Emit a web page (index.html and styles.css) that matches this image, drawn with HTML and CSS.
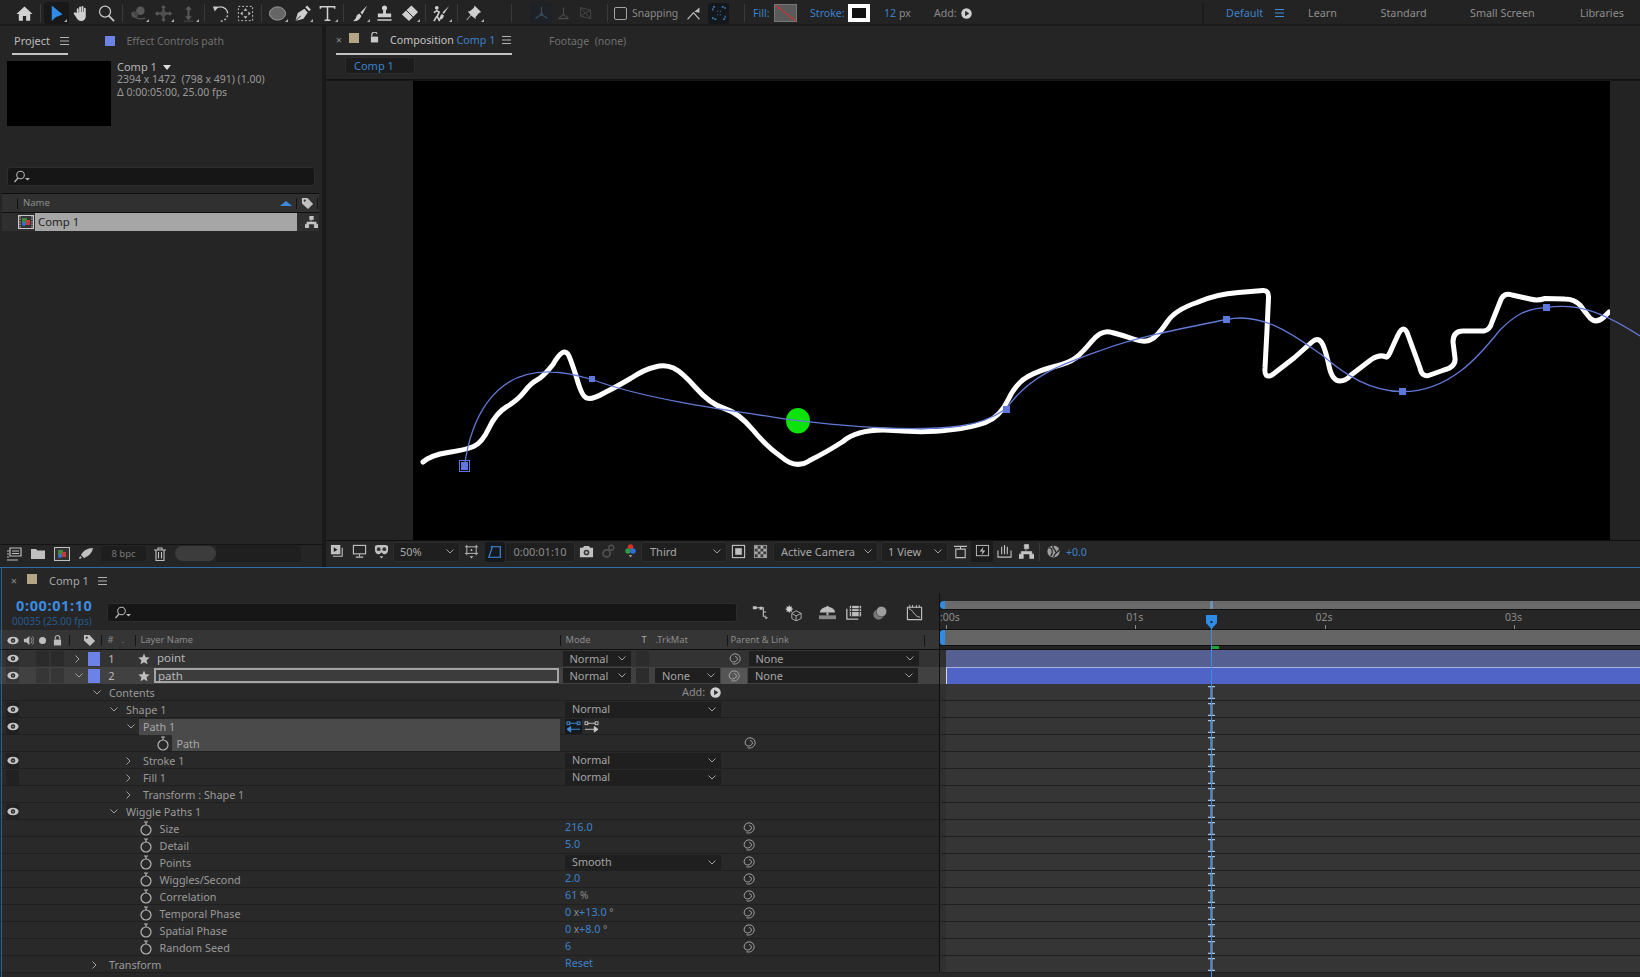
FILE: index.html
```html
<!DOCTYPE html>
<html lang="en">
<head>
<meta charset="utf-8">
<title>After Effects</title>
<link rel="stylesheet" href="styles.css">
</head>
<body>
<svg class="defs" aria-hidden="true">
  <symbol id="eye" viewBox="0 0 14 10"><ellipse cx="7" cy="5" rx="6.5" ry="4.4" fill="#c4c4c4"/><circle cx="7" cy="5" r="2.6" fill="#2a2a2a"/><circle cx="7" cy="5" r="1" fill="#888"/></symbol>
  <symbol id="spiral" viewBox="0 0 14 14"><path d="M4 12.500C8.500 14 13 11 13 6.800 13 3.300 10.500 1 7 1 3.800 1 1.300 3.600 1.300 6.800 1.300 9 3 10.500 5.500 10.500 7.800 10.500 9.800 8.800 9.800 6.800 9.800 5.200 8.500 4.200 7 4.200" fill="none" stroke="#a8a8a8" stroke-width="1.100"/></symbol>
  <symbol id="watch" viewBox="0 0 12 15"><circle cx="6" cy="9" r="5" fill="none" stroke="#b5b5b5" stroke-width="1.200"/><path d="M6 1v3M4 1h4" stroke="#b5b5b5" stroke-width="1.200"/></symbol>
  <symbol id="chev-d" viewBox="0 0 8 5"><path d="M.5.5 4 4 7.500.5" fill="none" stroke="#a0a0a0"/></symbol>
  <symbol id="chev-r" viewBox="0 0 5 8"><path d="M.5.5 4 4 .5 7.500" fill="none" stroke="#a0a0a0"/></symbol>
  <symbol id="menu" viewBox="0 0 9 8"><path d="M0 .5h9M0 4h9M0 7.500h9" stroke="#b0b0b0"/></symbol>
  <symbol id="star" viewBox="0 0 12 12"><path d="M6 .5 7.600 4.300 11.700 4.600 8.600 7.300 9.500 11.300 6 9.200 2.500 11.300 3.400 7.300.3 4.600 4.400 4.300z" fill="#bdbdbd"/></symbol>
  <symbol id="search" viewBox="0 0 18 13"><circle cx="7.500" cy="5" r="3.800" fill="none" stroke="#b5b5b5" stroke-width="1.100"/><path d="M5 8 1.500 12" stroke="#b5b5b5" stroke-width="1.300"/><path d="M12 8h5l-2.500 2.500z" fill="#b5b5b5"/></symbol>
  <symbol id="play" viewBox="0 0 12 12"><circle cx="6" cy="6" r="5.700" fill="#d0d0d0"/><path d="M4.500 3v6L9 6z" fill="#2a2a2a"/></symbol>
  <symbol id="tag" viewBox="0 0 14 14"><path d="M1 1h6l6 6.500L7.500 13 1 7z" fill="#c0c0c0"/><circle cx="4" cy="4" r="1.200" fill="#333"/></symbol>
  <symbol id="ibeam" viewBox="0 0 7 13"><path d="M0 .7h7M0 12.300h7" stroke="#a6c2de" stroke-width="1.300" fill="none"/><path d="M2.500 .7h2v11.600h-2z" fill="#8fb2d6"/></symbol>
  <symbol id="net" viewBox="0 0 14 13"><path d="M5 0h4v4H5zM0 9h4v4H0zM10 9h4v4h-4zM6.500 4v2.500M2 9V6.500h10V9" fill="#c4c4c4" stroke="#c4c4c4" stroke-width=".6"/></symbol>
</svg>

<header class="toolbar">
  <span class="grip"></span>
  <span class="tool"><svg viewBox="0 0 20 20"><path d="M10 2.500 1.500 10.500H4V17.500H8.300V12.500H11.700V17.500H16V10.500H18.500z" fill="#d2d2d2"/></svg></span>
  <i class="sep"></i>
  <span class="tool on corner"><svg viewBox="0 0 20 20"><path d="M5 1.500V18L9.500 13.700 16.500 11z" fill="#2f8ce6"/></svg></span>
  <span class="tool"><svg viewBox="0 0 20 20"><path d="M5 9.500V5.500a1 1 0 0 1 2 0V9h.5V3.500a1 1 0 0 1 2 0V8.500h.5V3a1 1 0 0 1 2 0V8.500h.5V5a1 1 0 0 1 2 0V12.500c0 3.200-2 5.500-5 5.500-2.800 0-4-1.800-5.500-4.500L2 10.500c-.8-1.300 1.200-2.300 2-1.300z" fill="#cfcfcf"/></svg></span>
  <span class="tool"><svg viewBox="0 0 20 20"><circle cx="8.500" cy="8" r="5.800" fill="none" stroke="#c8c8c8" stroke-width="1.300"/><path d="M12.500 12.500 18 18" stroke="#c8c8c8" stroke-width="1.800"/></svg></span>
  <i class="sep"></i>
  <span class="tool corner dim"><svg viewBox="0 0 20 20"><circle cx="12" cy="7" r="4.500" fill="#777"/><circle cx="6" cy="11" r="3.500" fill="#5a5a5a"/><path d="M3 9c2 6 8 8 14 6" fill="none" stroke="#777" stroke-width="1.300"/></svg></span>
  <span class="tool corner dim"><svg viewBox="0 0 20 20"><path d="M10 2v16M2 10h16" stroke="#777" stroke-width="2"/><path d="M10 1 7.500 4h5zM10 19l-2.500-3h5zM1 10l3-2.500v5zM19 10l-3-2.500v5z" fill="#777"/><circle cx="10" cy="10" r="3" fill="#666"/></svg></span>
  <span class="tool corner dim"><svg viewBox="0 0 20 20"><path d="M10 3v13" stroke="#777" stroke-width="2"/><path d="M6.500 6 10 2l3.500 4zM6.500 13 10 17l3.500-4z" fill="#777"/><path d="M5 18h10" stroke="#666"/></svg></span>
  <i class="sep"></i>
  <span class="tool"><svg viewBox="0 0 20 20"><path d="M4.500 5.500A7.500 7.500 0 1 1 5 16" fill="none" stroke="#c8c8c8" stroke-width="1.400" stroke-dasharray="14 .01 3 2 2 2 2 2 2"/><path d="M2 2.500 7.500 2.500 4 8z" fill="#c8c8c8"/></svg></span>
  <span class="tool"><svg viewBox="0 0 20 20"><rect x="2.500" y="2.500" width="15" height="15" fill="none" stroke="#c8c8c8" stroke-dasharray="2 2"/><path d="M10 4.500 8 7h4zM10 15.500 8 13h4zM4.500 10 7 8v4zM15.500 10 13 8v4z" fill="#c8c8c8"/></svg></span>
  <i class="sep"></i>
  <span class="tool corner"><svg viewBox="0 0 20 20"><ellipse cx="10" cy="10" rx="8.500" ry="7" fill="#666" stroke="#999"/></svg></span>
  <span class="tool corner"><svg viewBox="0 0 20 20"><path d="M2.500 18 5 9.500 12 5l3.500 4L11 15.500zM13 3.500l1.800-1.800 4 4L17 7.500z" fill="#cfcfcf"/><path d="M2.500 18 8 12.500" stroke="#222"/></svg></span>
  <span class="tool corner"><svg viewBox="0 0 20 20"><path d="M2.500 5V2.800H17.500V5M10 2.800V17M7 17h6" fill="none" stroke="#cfcfcf" stroke-width="1.600"/></svg></span>
  <i class="sep"></i>
  <span class="tool corner"><svg viewBox="0 0 20 20"><path d="M18 1.500 11 9l2 2zM10 10l-2.500 1.500C6.500 13 6.500 16 3 18c4 .5 7.500-1.500 9-5.500z" fill="#cfcfcf"/></svg></span>
  <span class="tool"><svg viewBox="0 0 20 20"><path d="M10 1.500a2.700 2.700 0 0 1 1.500 5V10H17v4H3v-4h5.500V6.500a2.700 2.700 0 0 1 1.500-5zM2.500 16h15v1.500h-15z" fill="#cfcfcf"/></svg></span>
  <span class="tool corner"><svg viewBox="0 0 20 20"><path d="M12 1.500 19 8.500 9.500 18 2 11z" fill="#cfcfcf"/><path d="M6.500 6.500 14 14" stroke="#222"/></svg></span>
  <i class="sep"></i>
  <span class="tool corner"><svg viewBox="0 0 20 20"><circle cx="5" cy="4" r="2" fill="#cfcfcf"/><path d="M2 9l3-2 2.500 1.500L5.500 13 8 18M5 13 2 18" fill="none" stroke="#cfcfcf" stroke-width="1.700"/><path d="M18 2 11 9l1.500 1.500zM10.500 10.500c-2 1-1.500 4-4 6 3 .5 5.500-1 6-4.500z" fill="#cfcfcf"/></svg></span>
  <i class="sep"></i>
  <span class="tool corner"><svg viewBox="0 0 20 20"><path d="M11 1.500 18 8.500 15.800 9.500 12 14 12.500 16 7.500 12 3 17 2.500 16.500 7 11.500 4 8 6 7.500 10.500 4z" fill="#cfcfcf"/></svg></span>
  <i class="sep far"></i>
  <span class="mini first"><svg viewBox="0 0 20 20"><path d="M10 2v9M10 11 3 16M10 11l7 5" stroke="#3a4c5c" stroke-width="1.400"/><circle cx="10" cy="11" r="2" fill="#3a4c5c"/></svg></span>
  <span class="mini"><svg viewBox="0 0 20 20"><path d="M10 3v8M10 11 4 16M10 11l6 5M4 16h12" stroke="#4a4a4a" stroke-width="1.300" fill="none"/></svg></span>
  <span class="mini"><svg viewBox="0 0 20 20"><path d="M4 3 16 6V16L4 13zM4 13 16 6M4 3 16 16" stroke="#4a4a4a" fill="none"/></svg></span>
  <i class="sep near"></i>
  <span class="check"></span><span class="snap-label">Snapping</span>
  <span class="mini"><svg viewBox="0 0 20 20"><path d="M3 17 10 9 17 17" fill="none" stroke="#bdbdbd" stroke-width="1.400"/><path d="M11 8l6-5v6zM10 9l4-4" fill="#bdbdbd"/></svg></span>
  <span class="focus"><svg viewBox="0 0 16 16"><path d="M1 5V1h4M11 1h4v4M15 11v4h-4M5 15H1v-4M6 6h1M9 6h1M6 10h1M9 10h1" fill="none" stroke="#3f8fdc" stroke-width="1.300" stroke-dasharray="2.500 1.500"/></svg></span>
  <i class="sep fill-sep"></i>
  <span class="link fill-label">Fill:</span>
  <span class="swatch-fill"></span>
  <span class="link stroke-label">Stroke:</span>
  <span class="swatch-stroke"></span>
  <span class="stroke-size"><span class="link">12</span> px</span>
  <span class="add-label">Add:</span>
  <svg class="play"><use href="#play"/></svg>
  <nav class="workspaces">
    <span class="link">Default</span>
    <svg class="ws-menu" viewBox="0 0 9 8"><path d="M0 .5h9M0 4h9M0 7.500h9" stroke="#3f8fdc"/></svg>
    <span>Learn</span><span>Standard</span><span>Small Screen</span><span>Libraries</span>
  </nav>
</header>

<main class="upper">
  <section class="project">
    <div class="tabs">
      <span class="tab tab-project">Project<svg class="menu"><use href="#menu"/></svg></span>
      <span class="blue-sq"></span>
      <span class="tab-dim">Effect Controls path</span>
    </div>
    <div class="info">
      <div class="thumb"></div>
      <div class="meta">
        <div class="meta-title">Comp 1 <b class="tri"></b></div>
        <div>2394 x 1472&nbsp; (798 x 491) (1.00)</div>
        <div>Δ 0:00:05:00, 25.00 fps</div>
      </div>
    </div>
    <div class="search p-search"><svg class="search-i"><use href="#search"/></svg></div>
    <div class="p-head">
      <i class="vline v1"></i><span class="p-name">Name</span>
      <b class="sort"></b><i class="vline v2"></i>
      <svg class="tag"><use href="#tag"/></svg><i class="vline v3"></i>
    </div>
    <div class="p-row">
      <svg class="comp-i" viewBox="0 0 16 14"><rect x=".5" y=".5" width="15" height="13" fill="#333" stroke="#c8c8c8"/><path d="M2 1v12M14 1v12" stroke="#c8c8c8" stroke-dasharray="1.500 1"/><rect x="4" y="3" width="5" height="5" fill="#3d8a3d"/><rect x="8" y="5" width="4" height="5" fill="#c23a3a"/><circle cx="6" cy="9" r="2" fill="#3d6fd0"/></svg>
      <span class="p-sel">Comp 1</span>
      <svg class="net"><use href="#net"/></svg>
    </div>
    <div class="p-fill"></div>
    <div class="p-foot">
      <span class="foot-i"><svg viewBox="0 0 16 14"><path d="M4 1h11v8H4zM1 4h2M1 7h2M1 10h2M1 13h11" fill="none" stroke="#c0c0c0" stroke-width="1.200"/><path d="M6 4h7M6 6.500h7" stroke="#c0c0c0"/></svg></span>
      <span class="foot-i"><svg viewBox="0 0 16 14"><path d="M1 2h5l1.500 1.500H15V12H1z" fill="#c0c0c0"/></svg></span>
      <span class="foot-i"><svg viewBox="0 0 16 14"><rect x=".5" y=".5" width="15" height="13" fill="#333" stroke="#c0c0c0"/><rect x="4" y="3" width="5" height="5" fill="#3d8a3d"/><rect x="8" y="5" width="4" height="5" fill="#c23a3a"/><circle cx="6" cy="9" r="2" fill="#3d6fd0"/></svg></span>
      <span class="foot-i"><svg viewBox="0 0 16 14"><path d="M15 1C9 1 5 4 3 8l3 3c5-2 8-5 9-10zM2 9l-1 3 3-1z" fill="#c0c0c0"/></svg></span>
      <span class="bpc">8 bpc</span>
      <span class="foot-i trash"><svg viewBox="0 0 14 14"><path d="M1 3h12M5 3V1h4v2M3 3v10.500h8V3M5.500 5v6.500M8.500 5v6.500" fill="none" stroke="#c0c0c0" stroke-width="1.100"/></svg></span>
      <span class="pill"></span>
      <span class="foot-rest"></span>
    </div>
  </section>
  <i class="gutter"></i>
  <section class="comp-panel">
    <div class="tabs comp-tabs">
      <span class="tab tab-comp">
        <span class="x">×</span><span class="tan"></span>
        <svg class="lock" viewBox="0 0 10 12"><path d="M2 5V3a3 3 0 0 1 5.800-1" fill="none" stroke="#c8c8c8" stroke-width="1.300"/><rect x="1" y="5" width="8" height="6.500" fill="#c8c8c8"/></svg>
        <span class="comp-title">Composition <span class="link">Comp 1</span></span>
        <svg class="menu"><use href="#menu"/></svg>
      </span>
      <span class="tab-dim footage">Footage&nbsp; (none)</span>
    </div>
    <div class="subtabs"><span class="subtab link">Comp 1</span></div>
    <div class="viewer">
      <div class="comp-canvas"></div>
      <svg class="overlay" viewBox="326 81 1314 459">
        <defs><clipPath id="cc"><rect x="413" y="81" width="1197" height="459"/></clipPath></defs>
        <path clip-path="url(#cc)" fill="none" stroke="#fff" stroke-width="5" stroke-linejoin="round" stroke-linecap="round" d="M423 462Q431 455 448 452.500Q465 450 473.500 446.500Q482 443 489 428Q496 413 507 406.500Q518 400 524.500 391.500Q531 383 537 380Q543 377 553 364.500Q564 345 569 356Q572 363 577 379Q582 397 587 398Q592 400 604 393Q616 387 630.500 378.500Q645 369 655 367Q665 364 673.500 368Q682 372 696 388Q710 404 724.500 408.500Q739 413 753 430Q767 447 781.500 457Q796 470 810.500 460Q825 453 843 441.500Q859 428 893.500 430.500Q926 433 948.500 430Q971 428 985.500 422.500Q1000 417 1008 400Q1016 383 1028 376.500Q1040 370 1054.500 366.500Q1069 363 1075.500 358Q1082 353 1092 341Q1102 329 1112 332.500Q1122 335 1133.500 339Q1145 343 1151 339.500Q1157 337 1167.500 321.500Q1175 310 1197 302.500Q1216 294 1238.500 292.500L1263 290.500Q1269 290 1268.500 298L1267 330 1265 368Q1264 379 1272 375L1294 358 1312 342Q1319 336 1323 345Q1326 352 1329 366Q1332 381 1340 381Q1346 381 1351 375L1372 359Q1380 354 1386 357Q1388 358 1392 348L1398 335Q1404 323 1408 335L1420 368Q1422 378 1430 375L1444 370Q1456 367 1455 358L1453 342Q1453 331 1463 331L1484 331Q1490 330 1492 322L1500 302Q1503 292 1512 295L1530 299Q1537 301 1545 298.500L1565 299Q1574 299 1580 305Q1585 312 1590 318Q1596 324 1604 317L1609 312"/>
        <ellipse cx="798" cy="420.700" rx="12" ry="12.700" fill="#0be30b"/>
        <path fill="none" stroke="#6279d6" stroke-width="1.300" d="M464.500 466C470 425 490 370 551 372C565 372 580 376 592 379.500C650 401 740 412 798 420.700C860 428 920 431 960 426C985 423 1000 413 1006 409C1030 375 1060 365 1102 350C1140 336 1190 327 1226.500 319.500C1265 311 1300 340 1322 355C1345 375 1370 391 1402 391.700C1450 392 1480 355 1500 330C1515 315 1525 309 1546 307.700C1575 303 1600 310 1640 336"/>
        <g fill="#5d78dc">
          <rect x="589" y="376" width="6" height="6"/><rect x="1003" y="406" width="7" height="7"/><rect x="1223" y="316" width="7" height="7"/><rect x="1399" y="388" width="7" height="7"/><rect x="1543" y="304" width="7" height="7"/><rect x="461" y="462" width="7" height="8"/>
        </g>
        <rect x="459.500" y="460.500" width="10" height="11" fill="none" stroke="#5d78dc"/>
      </svg>
    </div>
    <div class="v-bar">
      <span class="v-i"><svg viewBox="0 0 16 16"><rect x="1" y="1" width="10" height="10" fill="#c0c0c0"/><path d="M4 3.500v5L8 6z" fill="#222"/><path d="M13 4v9H3" fill="none" stroke="#c0c0c0" stroke-width="1.200"/></svg></span>
      <span class="v-i"><svg viewBox="0 0 16 16"><rect x="1.500" y="1.500" width="13" height="9" fill="none" stroke="#c0c0c0" stroke-width="1.200"/><path d="M8 11v2M4 14h8" stroke="#c0c0c0" stroke-width="1.200"/></svg></span>
      <span class="v-i"><svg viewBox="0 0 16 16"><path d="M1 3c0-1 1-2 3-2h8c2 0 3 1 3 2v3c0 3-2 5-4 5-2 0-2-2-3-2s-1 2-3 2c-2 0-4-2-4-5z" fill="#c0c0c0"/><circle cx="5" cy="5.500" r="2" fill="#333"/><circle cx="11" cy="5.500" r="2" fill="#333"/><path d="M6 13h4l-2 2.500z" fill="#c0c0c0"/></svg></span>
      <span class="v-sel w50">50%<svg class="chev"><use href="#chev-d"/></svg></span>
      <span class="v-i"><svg viewBox="0 0 16 16"><path d="M3 1v11M13 1v11M1 3h14M1 10h14M7 6.500h2M8 5.500v2" fill="none" stroke="#c0c0c0"/><path d="M6 13h4l-2 2.500z" fill="#c0c0c0"/></svg></span>
      <span class="v-on"><svg viewBox="0 0 16 16"><path d="M5 2h9v12H1zM5 2h-2M5 2v-1M14 2h1M14 14h1M1 14H0" fill="none" stroke="#3f8fdc" stroke-width="1.300"/></svg></span>
      <span class="v-time">0:00:01:10</span>
      <span class="v-i"><svg viewBox="0 0 16 16"><path d="M1 4h3l1.500-2h5L12 4h3v10H1z" fill="#c0c0c0"/><circle cx="8" cy="9" r="3" fill="#333"/><circle cx="8" cy="9" r="1.300" fill="#c0c0c0"/></svg></span>
      <span class="v-i"><svg viewBox="0 0 16 16"><circle cx="6" cy="10" r="3.800" fill="none" stroke="#505050" stroke-width="1.800"/><circle cx="11" cy="4" r="2.600" fill="none" stroke="#505050" stroke-width="1.500"/></svg></span>
      <span class="v-i"><svg viewBox="0 0 16 18"><circle cx="8" cy="3.500" r="3.300" fill="#d6322b"/><circle cx="5" cy="8.500" r="3.300" fill="#2b9a46"/><circle cx="11" cy="8.500" r="3.300" fill="#2f6ed8"/><path d="M6 13.500h4L8 16z" fill="#c0c0c0"/></svg></span>
      <span class="v-sel w-third">Third<svg class="chev"><use href="#chev-d"/></svg></span>
      <span class="v-i"><svg viewBox="0 0 16 16"><rect x="1.500" y="1.500" width="13" height="13" fill="none" stroke="#c0c0c0" stroke-width="1.200"/><rect x="4.500" y="4.500" width="7" height="7" fill="#c0c0c0"/></svg></span>
      <span class="v-i"><svg viewBox="0 0 16 16"><rect x="1.500" y="1.500" width="13" height="13" fill="#3a3a3a" stroke="#999"/><path d="M2 2h3v3H2zM8 2h3v3H8zM5 5h3v3H5zM11 5h3v3h-3zM2 8h3v3H2zM8 8h3v3H8zM5 11h3v3H5zM11 11h3v3h-3z" fill="#aaa"/></svg></span>
      <span class="v-sel w-cam">Active Camera<svg class="chev"><use href="#chev-d"/></svg></span>
      <span class="v-sel w-view">1 View<svg class="chev"><use href="#chev-d"/></svg></span>
      <span class="v-i v-i1"><svg viewBox="0 0 16 16"><path d="M1 2.500h14M3 5.500h10v9H3zM8 3v2" fill="none" stroke="#c0c0c0" stroke-width="1.200"/></svg></span>
      <span class="v-i v-dark"><svg viewBox="0 0 16 16"><rect x="1.500" y="1.500" width="13" height="11" fill="none" stroke="#c0c0c0"/><path d="M9 3 5 8h3l-1 4 4-5H8z" fill="#c0c0c0"/></svg></span>
      <span class="v-i"><svg viewBox="0 0 16 16"><path d="M1 7v7h14V7M5 3v8M8 1v10M11 3v8" fill="none" stroke="#c0c0c0" stroke-width="1.200"/></svg></span>
      <span class="v-i"><svg viewBox="0 0 16 16"><use href="#net"/></svg></span>
      <i class="v-sep"></i>
      <span class="v-i"><svg viewBox="0 0 16 16"><circle cx="8" cy="8" r="6.500" fill="#9d9d9d"/><path d="M8 1.500C5 5 12 6 10 9M3 4c4 0 5 5 2 9M14 6c-2 4-5 3-6 8" fill="none" stroke="#222" stroke-width="1.300"/></svg></span>
      <span class="link exposure">+0.0</span>
    </div>
  </section>
</main>

<section class="timeline">
  <div class="tl-tab">
    <span class="x tl-x">×</span><span class="tan tl-tan"></span>
    <span class="tl-name">Comp 1</span><svg class="menu tl-menu"><use href="#menu"/></svg>
  </div>
  <div class="tl-ctrl">
    <div class="tl-ctrl-left">
      <div class="time">
        <div class="timecode">0:00:01:10</div>
        <div class="frames">00035 (25.00 fps)</div>
      </div>
      <div class="search tl-search"><svg class="search-i"><use href="#search"/></svg></div>
      <span class="c-i m12"><svg viewBox="0 0 20 16"><path d="M2 3h6l5 0v9h3M13 7.500h3" fill="none" stroke="#c0c0c0" stroke-width="1.200"/><path d="M2 1.500h4v3H2zM9 2h3v3H9z" fill="#c0c0c0"/><path d="M14 13h4l-2 2z" fill="#c0c0c0"/></svg></span>
      <span class="c-i m9"><svg viewBox="0 0 20 20"><path d="M5 1l1 2.500L8.500 2.500 7.500 5l2.500 1-2.500 1 1 2.500L6 8.500 5 11 4 8.500 1.500 9.500l1-2.500L0 6l2.500-1-1-2.500L4 3.500z" fill="#d0d0d0"/><path d="M13 8l6 3v6l-6 3-5-3v-6zM8 11l5 3 6-3M13 14v6" fill="none" stroke="#c0c0c0"/></svg></span>
      <span class="c-i m10"><svg viewBox="0 0 20 16"><path d="M2 8a8 6 0 0 1 16 0z" fill="#bdbdbd"/><path d="M9 8h2v3H9z" fill="#bdbdbd"/><path d="M1 11h18v4H1z" fill="#888"/><path d="M9 1h2v2H9z" fill="#bdbdbd"/></svg></span>
      <span class="c-i m2"><svg viewBox="0 0 20 16"><path d="M6 1h12v11H6z" fill="#bdbdbd"/><path d="M8 1v11M16 1v11M6 4h12M6 7h12" stroke="#2a2a2a"/><path d="M3 4v11h12" fill="none" stroke="#bdbdbd" stroke-width="1.400"/></svg></span>
      <span class="c-i m3"><svg viewBox="0 0 20 16"><circle cx="8" cy="10" r="5.500" fill="#777"/><circle cx="11" cy="7" r="5.500" fill="#9d9d9d" stroke="#2a2a2a" stroke-width=".6"/></svg></span>
      <span class="c-i m10"><svg viewBox="0 0 20 18"><path d="M2.500 3.500h15v13h-15z" fill="none" stroke="#c0c0c0" stroke-width="1.200"/><path d="M5 1v3M8 1v3M12 1v3M15 1v3" stroke="#c0c0c0"/><path d="M4 5c4 0 6 9 12 9" fill="none" stroke="#c0c0c0"/></svg></span>
    </div>
    <i class="tl-div"></i>
    <div class="ruler-wrap">
      <div class="nav-bar"><b class="handle"></b><span class="nav-fill"></span></div>
      <div class="ruler">
        <span class="tick first">:00s</span><span class="tick">01s</span><span class="tick">02s</span><span class="tick">03s</span>
      </div>
    </div>
  </div>
  <div class="tl-head">
    <div class="cols">
      <svg class="h-eye"><use href="#eye"/></svg>
      <svg class="h-spk" viewBox="0 0 12 12"><path d="M1 4h2.500L7 1v10L3.500 8H1z" fill="#bbb"/><path d="M8.500 3a4 4 0 0 1 0 6M10 1.500a6 6 0 0 1 0 9" fill="none" stroke="#bbb" stroke-width=".8"/></svg>
      <b class="h-dot"></b>
      <svg class="h-lock" viewBox="0 0 10 12"><path d="M2.500 5V3a2.500 2.500 0 0 1 5 0v2" fill="none" stroke="#bbb" stroke-width="1.200"/><rect x="1" y="5" width="8" height="6.500" fill="#bbb"/></svg>
      <i class="vline h-v1"></i>
      <svg class="h-tag"><use href="#tag"/></svg>
      <i class="vline h-v2"></i>
      <span class="h-num">#</span><span class="h-dotc">.</span>
      <i class="vline h-v3"></i>
      <span class="h-layer">Layer Name</span>
      <i class="vline h-v4"></i>
      <span class="h-mode">Mode</span><span class="h-t">T</span><span class="h-trk">.TrkMat</span>
      <i class="vline h-v5"></i>
      <span class="h-parent">Parent &amp; Link</span>
      <i class="vline h-v6"></i>
    </div>
    <i class="tl-div"></i>
    <div class="work-wrap"><div class="work"><b class="handle big"></b><span class="work-fill"></span></div><div class="cache"><b class="green"></b></div></div>
  </div>

  <div class="row layer">
    <div class="left">
      <span class="eye-cell"><svg><use href="#eye"/></svg></span><span class="sw a"></span><span class="sw b"></span>
      <svg class="l-chev r"><use href="#chev-r"/></svg><span class="l-color"></span><span class="l-num">1</span><svg class="l-star"><use href="#star"/></svg>
      <span class="l-name">point</span>
      <span class="sel mode">Normal<svg class="chev"><use href="#chev-d"/></svg></span>
      <span class="tcell"></span><span class="trk-empty"></span>
      <svg class="l-spiral"><use href="#spiral"/></svg>
      <span class="sel parent">None<svg class="chev"><use href="#chev-d"/></svg></span>
    </div>
    <i class="tl-div"></i><div class="gut"></div><div class="track"><div class="bar b1"></div></div>
  </div>
  <div class="row layer sel-row">
    <div class="left">
      <span class="eye-cell"><svg><use href="#eye"/></svg></span><span class="sw a"></span><span class="sw b"></span>
      <svg class="l-chev d"><use href="#chev-d"/></svg><span class="l-color"></span><span class="l-num">2</span><svg class="l-star"><use href="#star"/></svg>
      <span class="l-name editing">path</span>
      <span class="sel mode">Normal<svg class="chev"><use href="#chev-d"/></svg></span>
      <span class="tcell"></span>
      <span class="sel trk">None<svg class="chev"><use href="#chev-d"/></svg></span>
      <span class="pcell"><svg><use href="#spiral"/></svg></span>
      <span class="sel parent">None<svg class="chev"><use href="#chev-d"/></svg></span>
    </div>
    <i class="tl-div"></i><div class="gut"></div><div class="track"><div class="bar b2"></div></div>
  </div>

  <div class="row prop">
    <div class="left"><span class="eye-none"></span><span class="name d1"><svg class="tw d"><use href="#chev-d"/></svg>Contents</span><span class="val add">Add:<svg class="play"><use href="#play"/></svg></span></div>
    <i class="tl-div"></i><div class="gut"></div><div class="track"><svg class="ib"><use href="#ibeam"/></svg></div>
  </div>
  <div class="row prop">
    <div class="left"><span class="eye-cell dark"><svg><use href="#eye"/></svg></span><span class="name d2"><svg class="tw d"><use href="#chev-d"/></svg>Shape 1</span><span class="val"><span class="sel wide">Normal<svg class="chev"><use href="#chev-d"/></svg></span></span></div>
    <i class="tl-div"></i><div class="gut"></div><div class="track"><svg class="ib"><use href="#ibeam"/></svg></div>
  </div>
  <div class="row prop">
    <div class="left"><span class="eye-cell dark"><svg><use href="#eye"/></svg></span><span class="name d3"><svg class="tw d"><use href="#chev-d"/></svg><span class="hl hl-a">Path 1</span></span>
      <span class="val"><span class="dir on"><svg viewBox="0 0 16 14"><path d="M1 3.500h14" stroke="#3f8fdc"/><rect x="1" y="2" width="3" height="3" fill="#1d1d1d" stroke="#3f8fdc"/><rect x="12" y="2" width="3" height="3" fill="#1d1d1d" stroke="#3f8fdc"/><path d="M3 10h12M1 10l4-3v6z" stroke="#3f8fdc" fill="#3f8fdc"/></svg></span><span class="dir"><svg viewBox="0 0 16 14"><path d="M1 3.500h14" stroke="#ccc"/><rect x="1" y="2" width="3" height="3" fill="#1d1d1d" stroke="#ccc"/><rect x="12" y="2" width="3" height="3" fill="#1d1d1d" stroke="#ccc"/><path d="M1 10h12M15 10l-4-3v6z" stroke="#ccc" fill="#ccc"/></svg></span></span></div>
    <i class="tl-div"></i><div class="gut"></div><div class="track"><svg class="ib"><use href="#ibeam"/></svg></div>
  </div>
  <div class="row prop">
    <div class="left"><span class="eye-none"></span><span class="name d5"><svg class="watch"><use href="#watch"/></svg><span class="hl hl-b">Path</span></span><span class="val"><svg class="link-spiral path-s"><use href="#spiral"/></svg></span></div>
    <i class="tl-div"></i><div class="gut"></div><div class="track"><svg class="ib"><use href="#ibeam"/></svg></div>
  </div>
  <div class="row prop">
    <div class="left"><span class="eye-cell dark"><svg><use href="#eye"/></svg></span><span class="name d3"><svg class="tw r"><use href="#chev-r"/></svg>Stroke 1</span><span class="val"><span class="sel wide">Normal<svg class="chev"><use href="#chev-d"/></svg></span></span></div>
    <i class="tl-div"></i><div class="gut"></div><div class="track"><svg class="ib"><use href="#ibeam"/></svg></div>
  </div>
  <div class="row prop">
    <div class="left"><span class="eye-cell dark"></span><span class="name d3"><svg class="tw r"><use href="#chev-r"/></svg>Fill 1</span><span class="val"><span class="sel wide">Normal<svg class="chev"><use href="#chev-d"/></svg></span></span></div>
    <i class="tl-div"></i><div class="gut"></div><div class="track"><svg class="ib"><use href="#ibeam"/></svg></div>
  </div>
  <div class="row prop">
    <div class="left"><span class="eye-none"></span><span class="name d3"><svg class="tw r"><use href="#chev-r"/></svg>Transform : Shape 1</span></div>
    <i class="tl-div"></i><div class="gut"></div><div class="track"><svg class="ib"><use href="#ibeam"/></svg></div>
  </div>
  <div class="row prop">
    <div class="left"><span class="eye-cell dark"><svg><use href="#eye"/></svg></span><span class="name d2"><svg class="tw d"><use href="#chev-d"/></svg>Wiggle Paths 1</span></div>
    <i class="tl-div"></i><div class="gut"></div><div class="track"><svg class="ib"><use href="#ibeam"/></svg></div>
  </div>
  <div class="row prop">
    <div class="left"><span class="eye-none"></span><span class="name d4"><svg class="watch"><use href="#watch"/></svg>Size</span><span class="val num">216.0<svg class="link-spiral"><use href="#spiral"/></svg></span></div>
    <i class="tl-div"></i><div class="gut"></div><div class="track"><svg class="ib"><use href="#ibeam"/></svg></div>
  </div>
  <div class="row prop">
    <div class="left"><span class="eye-none"></span><span class="name d4"><svg class="watch"><use href="#watch"/></svg>Detail</span><span class="val num">5.0<svg class="link-spiral"><use href="#spiral"/></svg></span></div>
    <i class="tl-div"></i><div class="gut"></div><div class="track"><svg class="ib"><use href="#ibeam"/></svg></div>
  </div>
  <div class="row prop">
    <div class="left"><span class="eye-none"></span><span class="name d4"><svg class="watch"><use href="#watch"/></svg>Points</span><span class="val"><span class="sel wide smooth">Smooth<svg class="chev"><use href="#chev-d"/></svg></span><svg class="link-spiral"><use href="#spiral"/></svg></span></div>
    <i class="tl-div"></i><div class="gut"></div><div class="track"><svg class="ib"><use href="#ibeam"/></svg></div>
  </div>
  <div class="row prop">
    <div class="left"><span class="eye-none"></span><span class="name d4"><svg class="watch"><use href="#watch"/></svg>Wiggles/Second</span><span class="val num">2.0<svg class="link-spiral"><use href="#spiral"/></svg></span></div>
    <i class="tl-div"></i><div class="gut"></div><div class="track"><svg class="ib"><use href="#ibeam"/></svg></div>
  </div>
  <div class="row prop">
    <div class="left"><span class="eye-none"></span><span class="name d4"><svg class="watch"><use href="#watch"/></svg>Correlation</span><span class="val num">61<em>&nbsp;%</em><svg class="link-spiral"><use href="#spiral"/></svg></span></div>
    <i class="tl-div"></i><div class="gut"></div><div class="track"><svg class="ib"><use href="#ibeam"/></svg></div>
  </div>
  <div class="row prop">
    <div class="left"><span class="eye-none"></span><span class="name d4"><svg class="watch"><use href="#watch"/></svg>Temporal Phase</span><span class="val num">0<em> x</em>+13.0<em> °</em><svg class="link-spiral"><use href="#spiral"/></svg></span></div>
    <i class="tl-div"></i><div class="gut"></div><div class="track"><svg class="ib"><use href="#ibeam"/></svg></div>
  </div>
  <div class="row prop">
    <div class="left"><span class="eye-none"></span><span class="name d4"><svg class="watch"><use href="#watch"/></svg>Spatial Phase</span><span class="val num">0<em> x</em>+8.0<em> °</em><svg class="link-spiral"><use href="#spiral"/></svg></span></div>
    <i class="tl-div"></i><div class="gut"></div><div class="track"><svg class="ib"><use href="#ibeam"/></svg></div>
  </div>
  <div class="row prop">
    <div class="left"><span class="eye-none"></span><span class="name d4"><svg class="watch"><use href="#watch"/></svg>Random Seed</span><span class="val num">6<svg class="link-spiral"><use href="#spiral"/></svg></span></div>
    <i class="tl-div"></i><div class="gut"></div><div class="track"><svg class="ib"><use href="#ibeam"/></svg></div>
  </div>
  <div class="row prop">
    <div class="left"><span class="eye-none"></span><span class="name d1"><svg class="tw r"><use href="#chev-r"/></svg>Transform</span><span class="val num">Reset</span></div>
    <i class="tl-div"></i><div class="gut"></div><div class="track"><svg class="ib"><use href="#ibeam"/></svg></div>
  </div>

  <b class="cti-mark"></b>
  <svg class="cti-head" viewBox="0 0 13 14"><path d="M1 0h11v8L6.500 14 1 8z" fill="#2f8ce6"/><path d="M5.500 6h2v2h-2z" fill="#123"/></svg>
  <b class="cti-line"></b>
</section>
</body>
</html>
```

FILE: styles.css
```css
* { box-sizing: border-box; }
html, body { margin: 0; padding: 0; }
body {
  width: 1640px; height: 977px; overflow: hidden;
  background: #232323; color: #9c9c9c;
  font: 11px/16px "Noto Sans", "Open Sans", sans-serif;
  display: flex; flex-direction: column;
}
i, b, em { font-style: normal; font-weight: normal; }
.defs { position: absolute; width: 0; height: 0; }
.link { color: #3b82cc; }

/* top toolbar */
.toolbar { height: 26px; flex: none; display: flex; align-items: center; background: #232323; border-bottom: 2px solid #1a1a1a; padding-top: 2px; font-size: 10.6px; }
.grip { width: 11.5px; }
.tool { position: relative; width: 25px; height: 22px; flex: none; display: flex; align-items: center; justify-content: center; }
.tool svg { width: 19px; height: 19px; }
.tool.on { background: #181818; border-radius: 3px; }
.tool.corner::after { content: ""; position: absolute; right: 2px; bottom: 2px; border-style: solid; border-width: 0 0 3px 3px; border-color: transparent transparent #b0b0b0 transparent; }
.tool.dim svg { opacity: .65; }
.sep { width: 7px; height: 18px; flex: none; display: flex; justify-content: center; }
.sep::before { content: ""; width: 1px; background: #3a3a3a; }
.sep.far { margin-left: 22px; }
.sep.near { margin-left: 7.5px; }
.sep.fill-sep { margin-left: 11.500px; }
.mini { width: 22px; height: 22px; flex: none; display: flex; align-items: center; justify-content: center; }
.mini svg { width: 17px; height: 17px; }
.mini.first { margin-left: 15.5px; background: #1e2226; border-radius: 3px; }
.check { width: 13px; height: 13px; border: 1.500px solid #a5a5a5; border-radius: 2px; margin-left: 3.5px; flex: none; }
.snap-label { width: 50px; margin-left: 5px; flex: none; white-space: nowrap; color: #8a8a8a; font-size: 10.4px; }
.focus { width: 21px; height: 21px; margin-left: 4px; background: #15181b; border-radius: 3px; flex: none; display: flex; align-items: center; justify-content: center; }
.focus svg { width: 14px; height: 14px; }
.fill-label { width: 21px; margin-left: 5.5px; flex: none; }
.swatch-fill { width: 23px; height: 18px; flex: none; border: 1px solid #777; background: linear-gradient(to top right, #5a5a5a 47%, #b33a3a 47%, #b33a3a 53%, #5a5a5a 53%); }
.stroke-label { width: 38px; margin-left: 13px; flex: none; }
.swatch-stroke { width: 22px; height: 18px; flex: none; background: #111; border: 4px solid #fff; }
.stroke-size { width: 50px; margin-left: 14px; flex: none; color: #8a8a8a; }
.add-label { width: 27px; flex: none; color: #8a8a8a; }
.play { width: 11px; height: 11px; flex: none; }
.workspaces { margin-left: auto; width: 438px; height: 22px; flex: none; border-left: 2px solid #1c1c1c; padding-left: 22px; display: grid; grid-template-columns: 46px 36px 72.500px 89.500px 110px 59px; align-items: center; white-space: nowrap; color: #8e8e8e; font-size: 10.8px; }
.ws-menu { width: 9px; height: 8px; margin-left: 3px; }

/* upper area */
.upper { height: 541px; flex: none; display: flex; }
.project { width: 322px; flex: none; display: flex; flex-direction: column; background: #252525; }
.gutter { width: 4px; flex: none; background: #1a1a1a; }
.comp-panel { flex: 1; display: flex; flex-direction: column; background: #252525; min-width: 0; }
.tabs { height: 29px; flex: none; display: flex; align-items: center; }
.tab { height: 29px; display: flex; align-items: center; color: #bdbdbd; border-bottom: 2px solid #c4c4c4; }
.menu { width: 9px; height: 8px; flex: none; }
.tab-project { margin-left: 12px; padding: 2px 0 0 2px; width: 56px; }
.tab-project .menu { margin-left: 10px; }
.blue-sq { width: 10px; height: 10px; margin-left: 37px; background: #6c82e6; flex: none; }
.tab-dim { color: #6f6f6f; white-space: nowrap; font-size: 10.5px; }
.project .tab-dim { margin-left: 11.500px; }
.info { height: 112px; flex: none; display: flex; padding: 6px 0 0 7px; }
.thumb { width: 104px; height: 65px; background: #000; flex: none; }
.meta { margin-left: 6px; line-height: 13px; font-size: 10.5px; color: #9a9a9a; white-space: nowrap; margin-top: -1px; }
.meta-title { color: #b5b5b5; font-size: 11px; }
.tri { display: inline-block; margin-left: 3px; border-style: solid; border-width: 5px 4px 0; border-color: #ddd transparent transparent; vertical-align: 1px; }
.search { height: 19px; background: #161616; border: 1px solid #2c2c2c; border-radius: 3px; display: flex; align-items: center; }
.search-i { width: 18px; height: 13px; margin-left: 5px; flex: none; }
.p-search { margin: 0 7px; flex: none; }
.p-head { margin: 7px 3px 0 2px; height: 20px; flex: none; display: flex; align-items: center; background: #303030; border-top: 1px solid #0f0f0f; border-bottom: 1px solid #0f0f0f; font-size: 9.5px; color: #8f8f8f; }
.vline { width: 1px; height: 11px; background: #141414; flex: none; }
.v1 { margin-left: 15px; }
.p-name { margin-left: 5px; }
.sort { margin-left: auto; border-style: solid; border-width: 0 6px 5px; border-color: transparent transparent #3b8be0; }
.v2 { margin-left: 4px; }
.tag { width: 13px; height: 13px; margin-left: 4px; flex: none; }
.v3 { margin-left: 3px; margin-right: 1px; }
.p-row { margin: 0 3px 0 2px; height: 18px; flex: none; display: flex; align-items: center; background: #2f2f2f; }
.comp-i { width: 16px; height: 14px; margin-left: 16px; flex: none; }
.p-sel { width: 262px; height: 18px; margin-left: 1px; padding-left: 3px; background: #a6a6a6; color: #1f1f1f; line-height: 18px; flex: none; font-size: 11.4px; }
.net { width: 13px; height: 12px; margin-left: 8px; flex: none; }
.p-fill { flex: 1; }
.p-foot { height: 18px; margin-bottom: 5px; flex: none; display: flex; align-items: center; border-top: 1px solid #141414; }
.foot-i { width: 24px; height: 17px; flex: none; display: flex; align-items: center; justify-content: center; }
.foot-i svg { width: 16px; height: 14px; }
.foot-i:first-child { margin-left: 2px; }
.bpc { width: 45px; height: 15px; margin-left: 3px; background: #1e1e1e; border-radius: 3px; text-align: center; font-size: 9.5px; line-height: 15px; color: #777; flex: none; }
.trash { margin-left: 2px; }
.pill { width: 41px; height: 15px; border-radius: 8px; margin-left: 3px; background: #3c3c3c; flex: none; }
.foot-rest { width: 85px; height: 17px; background: #1f1f1f; flex: none; }

.tab-comp { margin-left: 10px; width: 176px; }
.x { color: #8a8a8a; width: 8px; font-size: 11px; text-align: center; flex: none; }
.tan { width: 10px; height: 10px; background: #b4a587; flex: none; }
.tab-comp .x { margin-left: -1px; }
.tab-comp .tan { margin-left: 6px; margin-bottom: 4px; }
.lock { width: 9px; height: 11px; margin-left: 11px; flex: none; margin-bottom: 4px; }
.comp-title { margin-left: 11px; white-space: nowrap; color: #c4c4c4; font-size: 10.7px; }
.tab-comp .menu { margin-left: auto; margin-right: 1px; }
.footage { margin-left: 37px; }
.subtabs { height: 25px; flex: none; display: flex; align-items: flex-start; padding: 2px 0 0 19px; border-bottom: 1px solid #111; }
.subtab { width: 70px; height: 17px; background: #1c1c1c; border: 1px solid #2c2c2c; border-radius: 3px; padding-left: 8px; line-height: 15px; }
.viewer { position: relative; height: 460px; flex: none; padding-left: 87px; background: #232323; border-top: 1px solid #161616; }
.comp-canvas { width: 1197px; height: 459px; background: #000; }
.overlay { position: absolute; left: 0; top: 0; width: 1314px; height: 459px; }
.v-bar { height: 27px; flex: none; display: flex; align-items: center; background: #262626; font-size: 11px; border-top: 1px solid #111; padding-bottom: 5px; }
.v-i { width: 22px; height: 21px; flex: none; display: flex; align-items: center; justify-content: center; }
.v-i svg { width: 15px; height: 15px; }
.v-i1 { margin-left: 1px; }
.v-dark { background: #1b1b1b; border-radius: 2px; }
.v-sel { height: 20px; flex: none; background: #1f1f1f; border: 1px solid #2c2c2c; border-radius: 3px; display: flex; align-items: center; padding-left: 6px; color: #a8a8a8; white-space: nowrap; }
.v-sel .chev, .sel .chev { width: 8px; height: 5px; margin-left: auto; margin-right: 5px; flex: none; }
.w50 { width: 67px; margin-left: 1px; }
.w-third { width: 86px; padding-left: 8px; }
.w-cam { width: 105px; margin-left: 2px; padding-left: 7px; }
.w-view { width: 67px; margin-left: 3px; }
.v-on { width: 20px; height: 20px; flex: none; margin-left: 3px; background: #15191d; border-radius: 3px; display: flex; align-items: center; justify-content: center; }
.v-on svg { width: 14px; height: 14px; }
.v-time { width: 70px; height: 20px; flex: none; background: #1f1f1f; border: 1px solid #2c2c2c; border-radius: 3px; text-align: center; line-height: 18px; color: #8a8a8a; }
.v-sep { width: 1px; height: 18px; background: #3a3a3a; margin: 0 2px; flex: none; }
.exposure { margin-left: 2px; font-size: 10.5px; }

/* timeline */
.timeline { position: relative; flex: 1; background: #262626; border-top: 1px solid #2f6ea8; min-height: 0; }
.timeline::before { content: ""; position: absolute; left: 1px; top: 0; bottom: 0; width: 1px; background: #2a5f94; z-index: 3; }
.tl-tab { height: 25px; display: flex; align-items: center; }
.tl-x { margin-left: 10px; }
.tl-tan { margin-left: 9px; margin-bottom: 3px; }
.tl-name { margin-left: 12px; color: #a8a8a8; }
.tl-menu { margin-left: 9px; }
.tl-ctrl { height: 37px; display: flex; }
.tl-ctrl-left { width: 939px; flex: none; display: flex; align-items: flex-start; }
.time { width: 107px; flex: none; padding: 4px 0 0 12px; }
.timecode { color: #3b8be0; font-weight: 700; font-size: 14.5px; letter-spacing: .6px; line-height: 18px; padding-left: 4px; font-family: "Open Sans", sans-serif; white-space: nowrap; }
.frames { color: #255a8f; font-size: 10px; line-height: 13px; white-space: nowrap; }
.tl-search { width: 630px; margin-top: 10px; flex: none; }
.tl-search .search-i { margin-left: 6px; }
.c-i { width: 24px; height: 20px; margin-top: 9px; flex: none; display: flex; align-items: center; justify-content: center; }
.c-i svg { width: 19px; height: 17px; }
.m12 { margin-left: 11.5px; }
.m9 { margin-left: 9px; }
.m10 { margin-left: 10px; }
.m2 { margin-left: 2px; }
.m3 { margin-left: 3px; }
.tl-div { width: 1px; flex: none; background: #0f0f0f; }
.ruler-wrap { flex: 1; padding-top: 8px; border-bottom: 1px solid #111; }
.nav-bar { height: 8px; display: flex; }
.handle { width: 5px; background: #2f8ce6; border-radius: 4px 0 0 4px; flex: none; }
.nav-fill { flex: 1; background: #6a6a6a; }
.ruler { display: grid; grid-template-columns: repeat(4, 189.300px); padding-left: 6px; height: 20px; border-top: 1px solid #111; color: #8c8c8c; font-size: 10.5px; line-height: 14px; }
.tick { position: relative; text-indent: -9px; }
.tick::after { content: ""; position: absolute; left: 0; bottom: 0; width: 1px; height: 4px; background: #8c8c8c; }
.tick.first { text-indent: -6px; }
.tl-head { height: 20px; display: flex; }
.cols { width: 939px; flex: none; display: flex; align-items: center; background: #353535; border-bottom: 1px solid #0f0f0f; padding-top: 1px; font-size: 9.3px; color: #8c8c8c; }
.h-eye { width: 12px; height: 9px; margin-left: 6.5px; flex: none; }
.h-spk { width: 11px; height: 11px; margin-left: 4px; flex: none; }
.h-dot { width: 7px; height: 7px; border-radius: 50%; background: #c0c0c0; margin-left: 5.5px; flex: none; }
.h-lock { width: 9px; height: 11px; margin-left: 7px; flex: none; }
.h-v1 { margin-left: 7px; }
.h-tag { width: 13px; height: 13px; margin-left: 12.5px; flex: none; }
.h-v2 { margin-left: 5.5px; }
.h-num { width: 12px; margin-left: 5.5px; flex: none; }
.h-dotc { width: 6px; margin-left: 2px; flex: none; }
.h-v3 { margin-left: 7px; }
.h-layer { width: 419px; margin-left: 5px; flex: none; }
.h-v4 { flex: none; }
.h-mode { width: 76px; margin-left: 5px; flex: none; }
.h-t { width: 14px; flex: none; color: #aaa; }
.h-trk { width: 71px; flex: none; }
.h-v5 { flex: none; }
.h-parent { width: 193px; margin-left: 3px; flex: none; }
.h-v6 { flex: none; }
.work-wrap { flex: 1; display: flex; flex-direction: column; }
.work { height: 15px; display: flex; }
.handle.big { border-radius: 3px 0 0 3px; }
.work-fill { flex: 1; background: #656565; }
.cache { height: 5px; background: #222; border-top: 1px solid #0f0f0f; border-bottom: 1px solid #0f0f0f; padding-left: 272px; }
.green { display: block; width: 7px; height: 3px; background: #1fa336; }

.row { height: 17px; display: flex; }
.left { width: 939px; flex: none; display: flex; align-items: center; white-space: nowrap; }
.gut { width: 6px; flex: none; }
.track { flex: 1; min-width: 0; display: flex; }
.layer { background: #333; }
.layer .gut { background: #2f2f2f; }
.sel-row { background: #414141; }
.sel-row .gut { background: #4a4a4a; }
.bar { flex: 1; }
.b1 { background: #555f91; }
.b2 { background: #5063c6; border-top: 1px solid #a9b3df; border-left: 1px solid #d8d8d8; }
.eye-cell { width: 13px; height: 15px; margin-left: 6px; flex: none; display: flex; align-items: center; justify-content: center; background: #2b2b2b; }
.eye-cell svg { width: 12px; height: 9px; }
.eye-none { width: 13px; margin-left: 6px; flex: none; }
.sw { width: 13px; height: 15px; flex: none; background: #2b2b2b; }
.sw.a { margin-left: 17px; }
.sw.b { margin-left: 2px; }
.sel-row .sw, .sel-row .eye-cell { background: #363636; }
.l-chev { flex: none; }
.l-chev.r { width: 5px; height: 8px; margin-left: 11px; margin-right: 4px; }
.l-chev.d { width: 8px; height: 5px; margin-left: 11px; margin-right: 1px; }
.l-color { width: 12px; height: 14px; margin-left: 3.5px; background: #6c82e6; flex: none; }
.l-num { width: 22px; margin-left: 1px; text-align: center; color: #b8b8b8; flex: none; }
.l-star { width: 12px; height: 12px; margin-left: 15px; flex: none; }
.l-name { width: 409.5px; height: 15px; padding-left: 7.5px; color: #b8b8b8; line-height: 14px; flex: none; font-size: 11.5px; }
.l-name.editing { width: 404.5px; margin: 0 .5px 0 4.5px; padding-left: 2px; border: 2px solid #a5a5a5; background: #3c3c3c; line-height: 11px; }
.sel { height: 15px; background: #1f1f1f; display: flex; align-items: center; padding-left: 7px; color: #a5a5a5; flex: none; }
.mode { width: 68px; margin-left: 3.500px; }
.tcell { width: 13px; height: 15px; margin-left: 5.5px; background: #2c2c2c; flex: none; }
.trk-empty { width: 65px; margin-left: 6px; flex: none; }
.trk { width: 65px; margin-left: 6px; }
.l-spiral { width: 12px; height: 12px; margin-left: 9px; flex: none; }
.pcell { width: 26px; height: 16px; margin-left: 1px; background: #555; display: flex; align-items: center; justify-content: center; flex: none; }
.pcell svg { width: 12px; height: 12px; }
.parent { width: 170px; margin-left: 1px; }
.layer:not(.sel-row) .parent { margin-left: 7.5px; }
.prop { background: #292929; border-bottom: 1px solid #1f1f1f; }
.prop .gut { background: #303030; }
.prop .track { background: #353535; padding-left: 262px; }
.eye-cell.dark { background: #212121; }
.prop .left { height: 16px; color: #9a9a9a; font-size: 10.8px; }
.name { width: 541px; height: 16px; flex: none; display: flex; align-items: center; padding-top: 1px; }
.d1 { padding-left: 74px; }
.d2 { padding-left: 91px; }
.d3 { padding-left: 108px; }
.d4 { padding-left: 120.5px; }
.d5 { padding-left: 137.5px; padding-top: 0; }
.tw { margin-right: 8px; flex: none; }
.tw.d { width: 8px; height: 5px; }
.tw.r { width: 5px; height: 8px; margin-left: -1px; margin-right: 12px; }
.watch { width: 12px; height: 15px; margin-right: 8px; flex: none; }
.d5 .watch { margin-right: 3.500px; }
.hl { flex: 1; height: 16px; background: #4a4a4a; color: #a8a8a8; display: flex; align-items: center; padding-top: 1px; }
.hl-a { margin-left: -4px; padding-left: 4px; }
.hl-b { padding-left: 4.5px; }
.val { width: 379px; margin-left: 5px; height: 16px; display: flex; align-items: center; flex: none; position: relative; }
.num { color: #3b82cc; line-height: 14px; align-items: flex-start; }
.num em { color: #8c8c8c; white-space: pre; font-size: 10px; }
.val.add { color: #8c8c8c; padding-left: 117px; }
.val.add .play { margin-left: 5px; }
.wide { width: 156px; }
.smooth { margin-right: 22px; }
.link-spiral { position: absolute; left: 178px; top: 2px; width: 12px; height: 12px; }
.path-s { left: 179px; }
.dir { width: 17px; height: 15px; flex: none; margin-right: 1px; background: #2a2a2a; display: flex; align-items: center; justify-content: center; }
.dir.on { background: #15191d; }
.dir svg { width: 15px; height: 13px; }
.ib { width: 7px; height: 13px; margin-top: 2px; flex: none; }
.cti-mark { position: absolute; left: 1210px; top: 33px; width: 3px; height: 8px; background: #6f8fb4; }
.cti-head { position: absolute; left: 1205px; top: 47px; width: 13px; height: 14px; }
.cti-line { position: absolute; left: 1211px; top: 60px; bottom: 0; width: 1px; background: #3d8be0; }
```
